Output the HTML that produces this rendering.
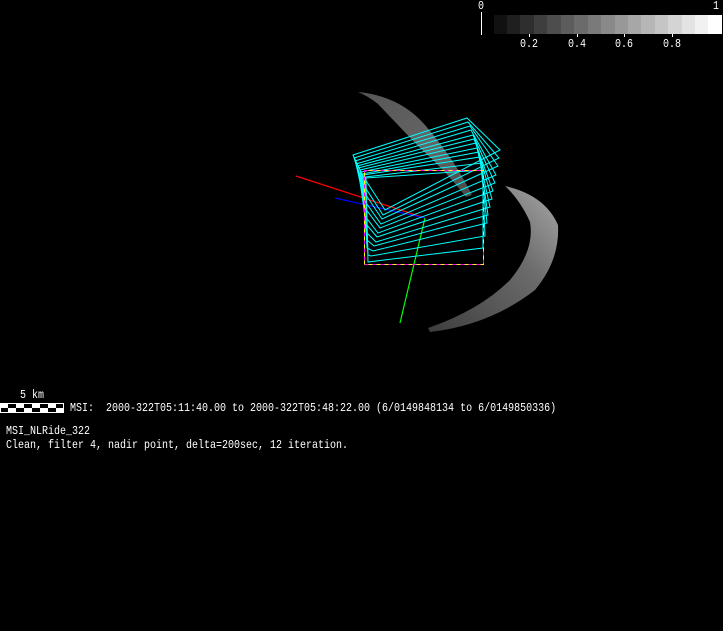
<!DOCTYPE html>
<html><head><style>
body{margin:0;background:#000;width:723px;height:631px;overflow:hidden;position:relative;font-family:"Liberation Mono","DejaVu Sans Mono",monospace;}
.t{position:absolute;color:#fff;font-size:10px;white-space:pre;line-height:12px;transform:scaleY(1.15);transform-origin:0 0}
</style></head><body>
<svg width="723" height="631" style="position:absolute;left:0;top:0">
<defs>
<linearGradient id="g1" x1="0" y1="0" x2="1" y2="1"><stop offset="0" stop-color="#666"/><stop offset="0.6" stop-color="#777"/><stop offset="1" stop-color="#555"/></linearGradient>
<linearGradient id="g2" x1="0" y1="1" x2="1" y2="0"><stop offset="0" stop-color="#444"/><stop offset="0.6" stop-color="#777"/><stop offset="1" stop-color="#bbb"/></linearGradient>
</defs>
<g>
<rect x="494" y="15" width="14" height="19" fill="#111"/><rect x="507" y="15" width="14" height="19" fill="#1f1f1f"/><rect x="520" y="15" width="14" height="19" fill="#2e2e2e"/><rect x="534" y="15" width="14" height="19" fill="#3e3e3e"/><rect x="547" y="15" width="14" height="19" fill="#4d4d4d"/><rect x="561" y="15" width="14" height="19" fill="#5c5c5c"/><rect x="574" y="15" width="14" height="19" fill="#6b6b6b"/><rect x="588" y="15" width="14" height="19" fill="#7a7a7a"/><rect x="601" y="15" width="14" height="19" fill="#898989"/><rect x="615" y="15" width="14" height="19" fill="#989898"/><rect x="628" y="15" width="14" height="19" fill="#a7a7a7"/><rect x="641" y="15" width="14" height="19" fill="#b6b6b6"/><rect x="655" y="15" width="14" height="19" fill="#c5c5c5"/><rect x="668" y="15" width="14" height="19" fill="#d4d4d4"/><rect x="682" y="15" width="14" height="19" fill="#e3e3e3"/><rect x="695" y="15" width="14" height="19" fill="#f1f1f1"/><rect x="708" y="15" width="14" height="19" fill="#fff"/>
<line x1="481.5" y1="12" x2="481.5" y2="35" stroke="#fff"/>
<line x1="529.5" y1="34" x2="529.5" y2="37" stroke="#fff"/><line x1="577.5" y1="34" x2="577.5" y2="37" stroke="#fff"/><line x1="624.5" y1="34" x2="624.5" y2="37" stroke="#fff"/><line x1="672.5" y1="34" x2="672.5" y2="37" stroke="#fff"/>
</g>
<rect x="0" y="403" width="64" height="10" fill="#fff"/>
<rect x="8" y="404" width="8" height="4" fill="#000"/><rect x="24" y="404" width="8" height="4" fill="#000"/><rect x="40" y="404" width="8" height="4" fill="#000"/><rect x="56" y="404" width="7" height="4" fill="#000"/>
<rect x="1" y="408" width="7" height="4" fill="#000"/><rect x="16" y="408" width="8" height="4" fill="#000"/><rect x="32" y="408" width="8" height="4" fill="#000"/><rect x="48" y="408" width="8" height="4" fill="#000"/>
<path d="M358,92 Q400,96 425,125 Q455,160 472,195 L466,197 Q445,170 420,148 Q395,122 378,104 Q368,96 358,92Z" fill="url(#g1)" opacity="0.85"/>
<path d="M505,186 Q545,195 558,225 Q560,260 535,290 Q490,325 430,332 L428,328 Q480,310 510,280 Q535,250 530,222 Q520,200 505,186Z" fill="url(#g2)" opacity="0.9"/>
<line x1="296" y1="176" x2="425" y2="218" stroke="#f00" stroke-width="1.2"/>
<line x1="335" y1="198" x2="425" y2="218" stroke="#00f" stroke-width="1.2"/>
<line x1="425" y1="218" x2="400" y2="323" stroke="#0f0" stroke-width="1.2"/>
<g fill="none" stroke="#0ff" stroke-width="1">
<polygon points="353,155 467,118 500,150 385,210 363,176"/>
<polygon points="354,158 468,122 499,158 383,215 363,184"/>
<polygon points="355,161 470,126 498,166 382,219 364,192"/>
<polygon points="356,164 471,130 496,175 381,224 364,200"/>
<polygon points="357,166 473,135 495,183 380,228 365,208"/>
<polygon points="358,168 474,139 493,191 378,233 365,216"/>
<polygon points="360,170 476,143 492,199 377,237 366,224"/>
<polygon points="361,172 477,148 490,207 376,242 366,232"/>
<polygon points="362,174 479,152 488,215 374,246 367,240"/>
<polygon points="363,175 480,157 487,223 373,251 367,248"/>
<polygon points="365,177 482,163 485,236 371,256 368,255"/>
<polygon points="366,178 483,170 483,248 368,262"/>
</g>
<rect x="364.5" y="170.5" width="119" height="94" fill="none" stroke="#f0f" stroke-dasharray="4,4"/>
<rect x="364.5" y="170.5" width="119" height="94" fill="none" stroke="#ff0" stroke-dasharray="4,4" stroke-dashoffset="4"/>
</svg>
<div class="t" style="left:478px;top:1px">0</div>
<div class="t" style="left:713px;top:1px">1</div>
<div class="t" style="left:520px;top:39px">0.2</div>
<div class="t" style="left:568px;top:39px">0.4</div>
<div class="t" style="left:615px;top:39px">0.6</div>
<div class="t" style="left:663px;top:39px">0.8</div>
<div class="t" style="left:20px;top:390px">5 km</div>
<div class="t" style="left:70px;top:403px">MSI:  2000-322T05:11:40.00 to 2000-322T05:48:22.00 (6/0149848134 to 6/0149850336)</div>
<div class="t" style="left:6px;top:426px">MSI_NLRide_322</div>
<div class="t" style="left:6px;top:440px">Clean, filter 4, nadir point, delta=200sec, 12 iteration.</div>
</body></html>
